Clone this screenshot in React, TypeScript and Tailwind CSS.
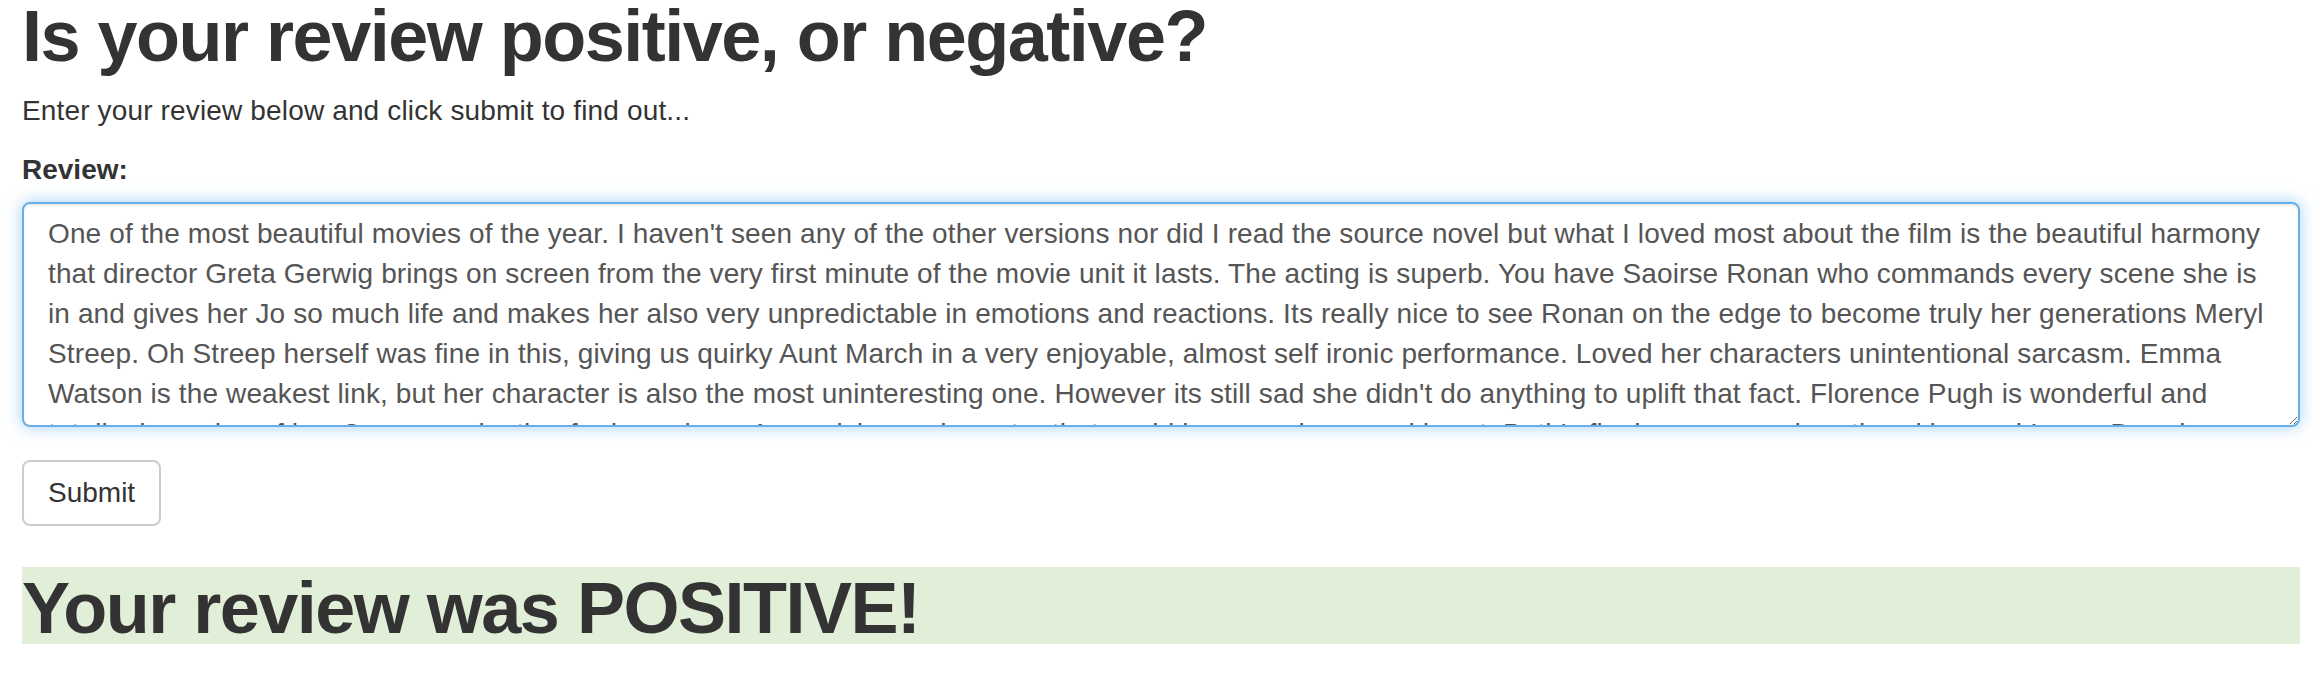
import React from "react";

const review =
  "One of the most beautiful movies of the year. I haven't seen any of the other versions nor did I read the source novel but what I loved most about the film is the beautiful harmony that director Greta Gerwig brings on screen from the very first minute of the movie unit it lasts. The acting is superb. You have Saoirse Ronan who commands every scene she is in and gives her Jo so much life and makes her also very unpredictable in emotions and reactions. Its really nice to see Ronan on the edge to become truly her generations Meryl Streep. Oh Streep herself was fine in this, giving us quirky Aunt March in a very enjoyable, almost self ironic performance. Loved her characters unintentional sarcasm. Emma Watson is the weakest link, but her character is also the most uninteresting one. However its still sad she didn't do anything to uplift that fact. Florence Pugh is wonderful and totally deserving of her Oscar nomination for her role as Amy, giving a character that could be annoying a real heart. Beth's final scenes are heartbreaking and Laura Dern is lovely as Marmee.";

export default function App() {
  return (
    <div className="min-h-[681px] bg-white pl-[22px] pr-[21px] font-['Liberation_Sans',Arial,sans-serif] text-[#333]">
      <h1 className="pt-[2px] text-[72px] font-bold leading-[68px] tracking-[-1.5px]">Is your review positive, or negative?</h1>
      <p className="mt-[21px] text-[28px] leading-[40px] tracking-[0.15px]">Enter your review below and click submit to find out...</p>

      <form onSubmit={(e) => e.preventDefault()}>
        <label htmlFor="review" className="mt-[19px] block text-[28px] font-bold leading-[40px]">
          Review:
        </label>
        <textarea
          id="review"
          defaultValue={review}
          className="mt-[12px] block h-[225px] w-full resize-y overflow-hidden rounded-[8px] border-2 border-[#66afe9] bg-white px-[24px] pt-[10px] text-[28px] leading-[40px] tracking-[0.12px] text-[#555] shadow-[inset_0_2px_2px_rgba(0,0,0,0.075),0_0_16px_rgba(102,175,233,0.6)] outline-none"
        />
        <button
          type="submit"
          className="mt-[33px] block rounded-[8px] border-2 border-[#ccc] bg-white px-[24px] py-[11px] text-[28px] leading-[40px] text-[#333]"
        >
          Submit
        </button>
      </form>

      <h1 className="mt-[41px] bg-[#e1efd9] pt-[5px] text-[72px] font-bold leading-[72px] tracking-[-1.5px]">Your review was POSITIVE!</h1>
    </div>
  );
}
